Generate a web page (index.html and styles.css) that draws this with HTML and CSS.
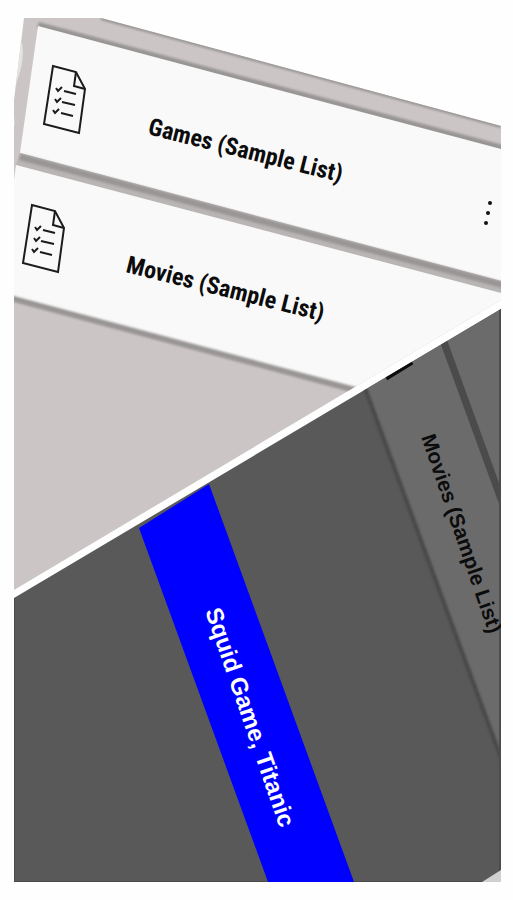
FILE: index.html
```html
<!DOCTYPE html>
<html lang="en">
<head>
    <meta charset="UTF-8">
    <meta name="viewport" content="width=device-width, initial-scale=1.0">
    <title>Sample Lists</title>
    <link rel="stylesheet" href="styles.css">
</head>
<body>
    <main class="showcase">
        <svg class="collage" viewBox="14 18 487 864">
            <defs>
                <clipPath id="lightClip">
                    <path d="M24 18H101L501 126V300L14 590V100Z"/>
                </clipPath>
                <clipPath id="darkClip">
                    <path d="M14 598L501 309V882H14Z"/>
                </clipPath>
                <filter id="soft" x="-5%" y="-20%" width="110%" height="140%">
                    <feGaussianBlur stdDeviation="1"/>
                </filter>
                <!-- Checklist document -->
                <g id="listIcon">
                    <path d="M53 66L76 72L85 89L79 133L44 124Z"/>
                    <path d="M76 72L74 86L85 89"/>
                    <path class="ticks" d="M56 88l2 3l4-4M64 91l12 3M55 99l2 3l4-4M62 102l13 3M53 110l2 3l4-4M61 113l12 3"/>
                </g>
            </defs>

            <!-- Light panel -->
            <g clip-path="url(#lightClip)">
                <path class="light-bg" d="M14 18H501V600H14Z"/>
                <path class="edge" filter="url(#soft)" d="M101 18L501 126"/>
                <path class="glare" d="M22 42Q25 58 18 78T15 125L12 125V70Z"/>
                <path class="shadow" filter="url(#soft)" d="M38 25L510 150"/>
                <path class="card" d="M38 26L501 149V281L20 153Z"/>
                <path class="gap" d="M20 153L501 281V293L16 165Z"/>
                <path class="shadow" filter="url(#soft)" d="M20 157L510 287"/>
                <path class="card" d="M16 165L501 293V430L14 297V180Z"/>
                <path class="shadow" filter="url(#soft)" d="M10 298L370 394"/>
                <use href="#listIcon" class="icon"/>
                <use href="#listIcon" class="icon" x="-21" y="139"/>
                <text class="list-name" transform="translate(147 134) rotate(14)">Games (Sample List)</text>
                <text class="list-name" transform="translate(125 272) rotate(14)">Movies (Sample List)</text>
                <foreignObject x="478" y="196" width="20" height="34">
                    <button class="menu-btn" type="button" aria-label="List options">
                        <svg class="dots" viewBox="0 0 20 34">
                            <circle cx="12" cy="7" r="2"/>
                            <circle cx="10" cy="17" r="2"/>
                            <circle cx="8" cy="27" r="2"/>
                        </svg>
                    </button>
                </foreignObject>
            </g>

            <!-- Dark panel -->
            <g clip-path="url(#darkClip)">
                <path class="dark-bg" d="M14 300H501V882H14Z"/>
                <path class="dark-card" d="M366 390L414 340L501 300V758Z"/>
                <path class="dark-edge" filter="url(#soft)" d="M365 388L501 758"/>
                <path class="dark-gap" d="M440 342L447 340L502 491V512Z"/>
                <path class="icon-corner" d="M386 378L412 362"/>
                <path class="banner" d="M139 528L209 484L354 882H268Z"/>
                <path class="frame" d="M14 598V882M500 309V882M14 882H268M354 882H501"/>
                <path class="corner" d="M482 882L501 870V882Z"/>
                <text class="dark-name" transform="translate(421 437) rotate(71)">Movies (Sample List)</text>
                <text class="banner-text" transform="translate(205 611) rotate(71)">Squid Game, Titanic</text>
            </g>
        </svg>
    </main>
</body>
</html>
```

FILE: styles.css
```css
body {
    margin: 0;
    background: #fefefe;
    font-family: "Liberation Sans", Arial, sans-serif;
}

.showcase {
    padding: 18px 12px 18px 14px;
}

.collage {
    display: block;
    width: 100%;
    height: auto;
}

/* Light panel */
.light-bg {
    fill: #cbc6c5;
}

.edge {
    fill: none;
    stroke: #9a9695;
    stroke-width: 4;
}

.glare {
    fill: #e4e2e2;
}

.card {
    fill: #f9f9f9;
}

.gap {
    fill: #b9b5b5;
}

.shadow {
    fill: none;
    stroke: #999595;
    stroke-width: 6;
}

.icon {
    fill: none;
    stroke: #1c1c1c;
    stroke-width: 2;
}

.ticks {
    stroke-width: 2;
}

.list-name {
    font-family: "Roboto Condensed", Roboto, sans-serif;
    font-size: 24px;
    font-weight: bold;
    fill: #0c0c0c;
}

.menu-btn {
    display: block;
    width: 100%;
    height: 100%;
    padding: 0;
    border: none;
    background: transparent;
    cursor: pointer;
}

.dots {
    display: block;
    width: 100%;
    fill: #111;
}

/* Dark panel */
.dark-bg {
    fill: #595959;
}

.dark-card {
    fill: #6b6b6b;
}

.dark-edge {
    fill: none;
    stroke: #484848;
    stroke-width: 4;
}

.dark-gap {
    fill: #4b4b4b;
}

.icon-corner {
    stroke: #0c0c0c;
    stroke-width: 5;
}

.dark-name {
    font-size: 21px;
    font-weight: bold;
    fill: #0c0c0c;
}

.banner {
    fill: #0000fe;
}

.banner-text {
    font-size: 24px;
    font-weight: bold;
    fill: #fff;
}

.frame {
    fill: none;
    stroke: #4c4c4c;
    stroke-width: 2;
}

.corner {
    fill: #d0d0d0;
}
```
